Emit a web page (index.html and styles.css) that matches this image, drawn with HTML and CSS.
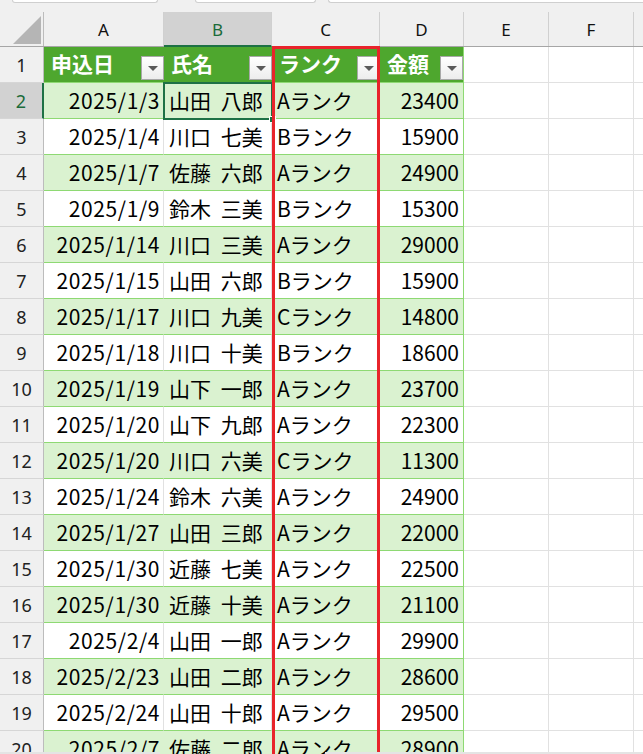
FILE: index.html
```html
<!DOCTYPE html>
<html lang="ja">
<head>
<meta charset="utf-8">
<title>Sheet</title>
<link rel="stylesheet" href="styles.css">
</head>
<body>
<div class="topstrip">
  <div class="tbox tbox-name"></div>
  <div class="tbox tbox-mid"></div>
  <div class="tbox tbox-formula"></div>
</div>
<div class="sheet">
  <div class="row colhead">
    <div class="corner"><svg width="44" height="35" viewBox="0 0 44 35"><polygon points="13,32 41,4 41,32" fill="#b5b5b5"/></svg></div>
    <div class="ch">A</div>
    <div class="ch ch-sel">B</div>
    <div class="ch">C</div>
    <div class="ch">D</div>
    <div class="ch">E</div>
    <div class="ch">F</div>
    <div class="ch ch-last"></div>
  </div>

  <div class="row">
    <div class="rh">1</div>
    <div class="th"><span>申込日</span><span class="fbtn"><i></i></span></div>
    <div class="th"><span>氏名</span><span class="fbtn"><i></i></span></div>
    <div class="th"><span>ランク</span><span class="fbtn"><i></i></span></div>
    <div class="th th-last"><span>金額</span><span class="fbtn"><i></i></span></div>
    <div class="e"></div><div class="e"></div><div class="e e-last"></div>
  </div>

  <div class="row band"><div class="rh rh-sel">2</div><div class="c r dt">2025/1/3</div><div class="c">山田 八郎</div><div class="c">Aランク</div><div class="c r d">23400</div><div class="e"></div><div class="e"></div><div class="e e-last"></div></div>
  <div class="row"><div class="rh">3</div><div class="c r dt">2025/1/4</div><div class="c">川口 七美</div><div class="c">Bランク</div><div class="c r d">15900</div><div class="e"></div><div class="e"></div><div class="e e-last"></div></div>
  <div class="row band"><div class="rh">4</div><div class="c r dt">2025/1/7</div><div class="c">佐藤 六郎</div><div class="c">Aランク</div><div class="c r d">24900</div><div class="e"></div><div class="e"></div><div class="e e-last"></div></div>
  <div class="row"><div class="rh">5</div><div class="c r dt">2025/1/9</div><div class="c">鈴木 三美</div><div class="c">Bランク</div><div class="c r d">15300</div><div class="e"></div><div class="e"></div><div class="e e-last"></div></div>
  <div class="row band"><div class="rh">6</div><div class="c r dt">2025/1/14</div><div class="c">川口 三美</div><div class="c">Aランク</div><div class="c r d">29000</div><div class="e"></div><div class="e"></div><div class="e e-last"></div></div>
  <div class="row"><div class="rh">7</div><div class="c r dt">2025/1/15</div><div class="c">山田 六郎</div><div class="c">Bランク</div><div class="c r d">15900</div><div class="e"></div><div class="e"></div><div class="e e-last"></div></div>
  <div class="row band"><div class="rh">8</div><div class="c r dt">2025/1/17</div><div class="c">川口 九美</div><div class="c">Cランク</div><div class="c r d">14800</div><div class="e"></div><div class="e"></div><div class="e e-last"></div></div>
  <div class="row"><div class="rh">9</div><div class="c r dt">2025/1/18</div><div class="c">川口 十美</div><div class="c">Bランク</div><div class="c r d">18600</div><div class="e"></div><div class="e"></div><div class="e e-last"></div></div>
  <div class="row band"><div class="rh">10</div><div class="c r dt">2025/1/19</div><div class="c">山下 一郎</div><div class="c">Aランク</div><div class="c r d">23700</div><div class="e"></div><div class="e"></div><div class="e e-last"></div></div>
  <div class="row"><div class="rh">11</div><div class="c r dt">2025/1/20</div><div class="c">山下 九郎</div><div class="c">Aランク</div><div class="c r d">22300</div><div class="e"></div><div class="e"></div><div class="e e-last"></div></div>
  <div class="row band"><div class="rh">12</div><div class="c r dt">2025/1/20</div><div class="c">川口 六美</div><div class="c">Cランク</div><div class="c r d">11300</div><div class="e"></div><div class="e"></div><div class="e e-last"></div></div>
  <div class="row"><div class="rh">13</div><div class="c r dt">2025/1/24</div><div class="c">鈴木 六美</div><div class="c">Aランク</div><div class="c r d">24900</div><div class="e"></div><div class="e"></div><div class="e e-last"></div></div>
  <div class="row band"><div class="rh">14</div><div class="c r dt">2025/1/27</div><div class="c">山田 三郎</div><div class="c">Aランク</div><div class="c r d">22000</div><div class="e"></div><div class="e"></div><div class="e e-last"></div></div>
  <div class="row"><div class="rh">15</div><div class="c r dt">2025/1/30</div><div class="c">近藤 七美</div><div class="c">Aランク</div><div class="c r d">22500</div><div class="e"></div><div class="e"></div><div class="e e-last"></div></div>
  <div class="row band"><div class="rh">16</div><div class="c r dt">2025/1/30</div><div class="c">近藤 十美</div><div class="c">Aランク</div><div class="c r d">21100</div><div class="e"></div><div class="e"></div><div class="e e-last"></div></div>
  <div class="row"><div class="rh">17</div><div class="c r dt">2025/2/4</div><div class="c">山田 一郎</div><div class="c">Aランク</div><div class="c r d">29900</div><div class="e"></div><div class="e"></div><div class="e e-last"></div></div>
  <div class="row band"><div class="rh">18</div><div class="c r dt">2025/2/23</div><div class="c">山田 二郎</div><div class="c">Aランク</div><div class="c r d">28600</div><div class="e"></div><div class="e"></div><div class="e e-last"></div></div>
  <div class="row"><div class="rh">19</div><div class="c r dt">2025/2/24</div><div class="c">山田 十郎</div><div class="c">Aランク</div><div class="c r d">29500</div><div class="e"></div><div class="e"></div><div class="e e-last"></div></div>
  <div class="row band"><div class="rh">20</div><div class="c r dt">2025/2/7</div><div class="c">佐藤 二郎</div><div class="c">Aランク</div><div class="c r d">28900</div><div class="e"></div><div class="e"></div><div class="e e-last"></div></div>

  <div class="selcell"><span class="handle"></span></div>
  <div class="redbox"></div>
</div>
<div class="bottombar bb-left"></div>
<div class="bottombar bb-right"></div>
</body>
</html>
```

FILE: styles.css
```css
* { box-sizing: border-box; }
html, body {
  margin: 0;
  padding: 0;
  width: 643px;
  height: 754px;
  overflow: hidden;
  background: #ffffff;
  font-family: "Noto Sans CJK JP", "Noto Sans", sans-serif;
}
.topstrip {
  height: 12px;
  background: #f0f0f0;
  display: flex;
  align-items: flex-start;
  position: relative;
}
.tbox {
  height: 3px;
  background: #ffffff;
  border: 1px solid #cfcfcf;
  border-top: none;
  border-radius: 0 0 4px 4px;
}
.tbox-name { margin-left: 12px; width: 146px; }
.tbox-mid { margin-left: 37px; width: 121px; }
.tbox-formula { margin-left: 12px; flex: 1; border-right: none; border-radius: 0 0 0 4px; }

.sheet {
  position: relative;
}
.row {
  display: grid;
  grid-template-columns: 44px 120px 108px 108px 84px 85px 85px 1fr;
  height: 36px;
}
.colhead {
  height: 35px;
  background: #f0f0f0;
  border-bottom: 1px solid #a6a6a6;
}
.corner {
  border-right: 1px solid #bcbcbc;
  height: 34px;
}
.corner svg { display: block; }
.ch {
  height: 34px;
  border-right: 1px solid #d0d0d0;
  display: flex;
  align-items: center;
  justify-content: center;
  font-family: "Noto Sans", "Noto Sans CJK JP", sans-serif;
  font-size: 17px;
  color: #111;
  padding-top: 1px;
}
.ch-sel {
  background: #d2d2d2;
  color: #1b6b3a;
  border-bottom: 2px solid #1e7145;
  height: 35px;
  margin-bottom: -1px;
}
.ch-last { border-right: none; }

.rh {
  background: #f0f0f0;
  border-right: 1px solid #bcbcbc;
  border-bottom: 1px solid #d6d6d6;
  display: flex;
  align-items: center;
  justify-content: center;
  font-family: "Noto Sans", "Noto Sans CJK JP", sans-serif;
  font-size: 18px;
  color: #222;
}
.rh-sel {
  background: #d2d2d2;
  color: #1b6b3a;
  border-right: 2px solid #1e7145;
}

.th {
  background: #4ea72e;
  border-bottom: 1px solid #8ed973;
  color: #ffffff;
  font-weight: 700;
  font-size: 21px;
  display: flex;
  justify-content: space-between;
  align-items: center;
  padding-left: 7px;
  line-height: 1;
}
.th-last { border-right: 1px solid #8ed973; }
.th span:first-child { padding-bottom: 2px; }
.fbtn {
  align-self: flex-end;
  margin-bottom: 2px;
  width: 23px;
  height: 24px;
  background: linear-gradient(#ffffff, #ededed);
  border: 1px solid #a8a8a8;
  display: flex;
  align-items: center;
  justify-content: center;
}
.fbtn i {
  display: block;
  width: 0;
  height: 0;
  border-left: 5px solid transparent;
  border-right: 5px solid transparent;
  border-top: 5px solid #5a5a5a;
  margin-top: 1px;
}

.c {
  background: #ffffff;
  border-right: 1px solid #e1e1e1;
  border-bottom: 1px solid #8ed973;
  font-size: 21px;
  color: #000;
  display: flex;
  align-items: center;
  padding-left: 5px;
  padding-right: 4px;
  white-space: pre;
  line-height: 1;
  overflow: hidden;
  word-spacing: 5px;
}
.c.r { justify-content: flex-end; }
.c.dt { letter-spacing: 0.6px; padding-right: 3px; }
.c.d { border-right: 1px solid #8ed973; }
.band .c {
  background: #daf2d0;
  border-right-color: #daf2d0;
}
.band .c.d { border-right-color: #8ed973; }

.e {
  border-right: 1px solid #e1e1e1;
  border-bottom: 1px solid #e1e1e1;
  background: #ffffff;
}
.e-last { border-right: none; }

.selcell {
  position: absolute;
  left: 163px;
  top: 70px;
  width: 110px;
  height: 38px;
  border: 2px solid #1e7145;
}
.handle {
  position: absolute;
  right: -5px;
  bottom: -5px;
  width: 7px;
  height: 7px;
  background: #1e7145;
  border: 1px solid #ffffff;
}
.redbox {
  position: absolute;
  left: 272px;
  top: 34px;
  width: 108px;
  height: 760px;
  border: 3px solid #e8242b;
}

.bottombar {
  position: fixed;
  bottom: 0;
  height: 2px;
  background: #e4e4e4;
}
.bb-left { left: 0; width: 160px; }
.bb-right { left: 325px; right: 0; }
```
